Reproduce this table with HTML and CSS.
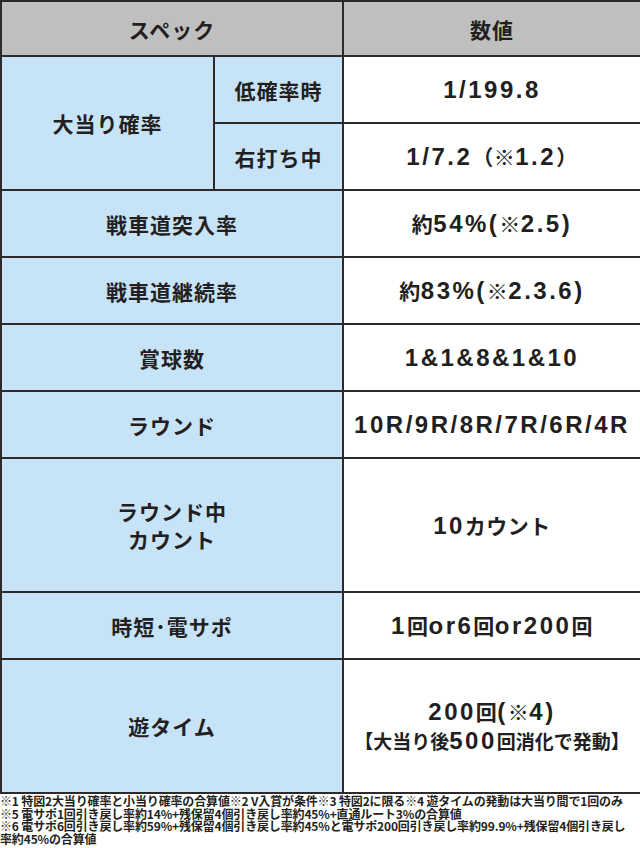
FILE: index.html
```html
<!DOCTYPE html>
<html lang="ja">
<head>
<meta charset="utf-8">
<title>スペック</title>
<link rel="stylesheet" href="styles.css">
</head>
<body>
<table class="spec">
  <colgroup>
    <col class="col-main">
    <col class="col-sub">
    <col class="col-value">
  </colgroup>
  <tr class="row-head">
    <th class="head" colspan="2">スペック</th>
    <th class="head">数値</th>
  </tr>
  <tr class="row">
    <th class="label" rowspan="2">大当り確率</th>
    <th class="label">低確率時</th>
    <td class="value">1/199.8</td>
  </tr>
  <tr class="row">
    <th class="label">右打ち中</th>
    <td class="value">1/7.2<span class="ja">（※</span>1.2<span class="ja">）</span></td>
  </tr>
  <tr class="row">
    <th class="label" colspan="2">戦車道突入率</th>
    <td class="value"><span class="ja">約</span>54%(<span class="ja">※</span>2.5)</td>
  </tr>
  <tr class="row">
    <th class="label" colspan="2">戦車道継続率</th>
    <td class="value"><span class="ja">約</span>83%(<span class="ja">※</span>2.3.6)</td>
  </tr>
  <tr class="row">
    <th class="label" colspan="2">賞球数</th>
    <td class="value">1&amp;1&amp;8&amp;1&amp;10</td>
  </tr>
  <tr class="row">
    <th class="label" colspan="2">ラウンド</th>
    <td class="value">10R/9R/8R/7R/6R/4R</td>
  </tr>
  <tr class="row-tall">
    <th class="label" colspan="2">ラウンド中<br>カウント</th>
    <td class="value">10<span class="ja">カウント</span></td>
  </tr>
  <tr class="row">
    <th class="label" colspan="2">時短･電サポ</th>
    <td class="value">1<span class="ja">回</span>or6<span class="ja">回</span>or200<span class="ja">回</span></td>
  </tr>
  <tr class="row-tall">
    <th class="label" colspan="2">遊タイム</th>
    <td class="value">200<span class="ja">回</span>(<span class="ja">※</span>4)<br><span class="ja cond">【大当り後</span>500<span class="ja cond">回消化で発動】</span></td>
  </tr>
</table>
<div class="notes">
  <p class="note">※1 特図2大当り確率と小当り確率の合算値※2 V入賞が条件※3 特図2に限る※4 遊タイムの発動は大当り間で1回のみ</p>
  <p class="note">※5 電サポ1回引き戻し率約14%+残保留4個引き戻し率約45%+直通ルート3%の合算値</p>
  <p class="note">※6 電サポ6回引き戻し率約59%+残保留4個引き戻し率約45%と電サポ200回引き戻し率約99.9%+残保留4個引き戻し率約45%の合算値</p>
</div>
</body>
</html>
```
FILE: styles.css
```css
html, body {
  margin: 0;
  padding: 0;
  background: #ffffff;
}
body {
  width: 640px;
  color: #231f20;
  font-family: "Noto Sans CJK JP", sans-serif;
}
.spec {
  width: 640px;
  border-collapse: collapse;
  table-layout: fixed;
}
.col-main { width: 213px; }
.col-sub { width: 129px; }
.col-value { width: 298px; }
.spec th, .spec td {
  border: 2px solid #2e2a2b;
  padding: 0;
  text-align: center;
  vertical-align: middle;
}
.row-head { height: 55px; }
.row { height: 67px; }
.row-tall { height: 134px; }
.head {
  background: #bfbfbf;
  font-weight: 700;
  font-size: 21px;
  letter-spacing: 1px;
}
.label {
  background: #c7e3f8;
  font-weight: 700;
  font-size: 21px;
  letter-spacing: 1px;
  line-height: 28px;
}
.value {
  background: #ffffff;
  font-family: "Liberation Sans", "Noto Sans CJK JP", sans-serif;
  font-weight: 700;
  font-size: 24px;
  letter-spacing: 2.5px;
  line-height: 29px;
  white-space: nowrap;
}
.ja {
  font-family: "Noto Sans CJK JP", sans-serif;
  font-size: 21px;
  letter-spacing: 0.5px;
}
.ja.cond {
  font-size: 19px;
  letter-spacing: 0;
}
.notes {
  padding: 1px 6px 0 0;
}
.note {
  margin: 0;
  font-weight: 700;
  font-size: 12px;
  line-height: 12.7px;
  letter-spacing: -0.15px;
}
```
